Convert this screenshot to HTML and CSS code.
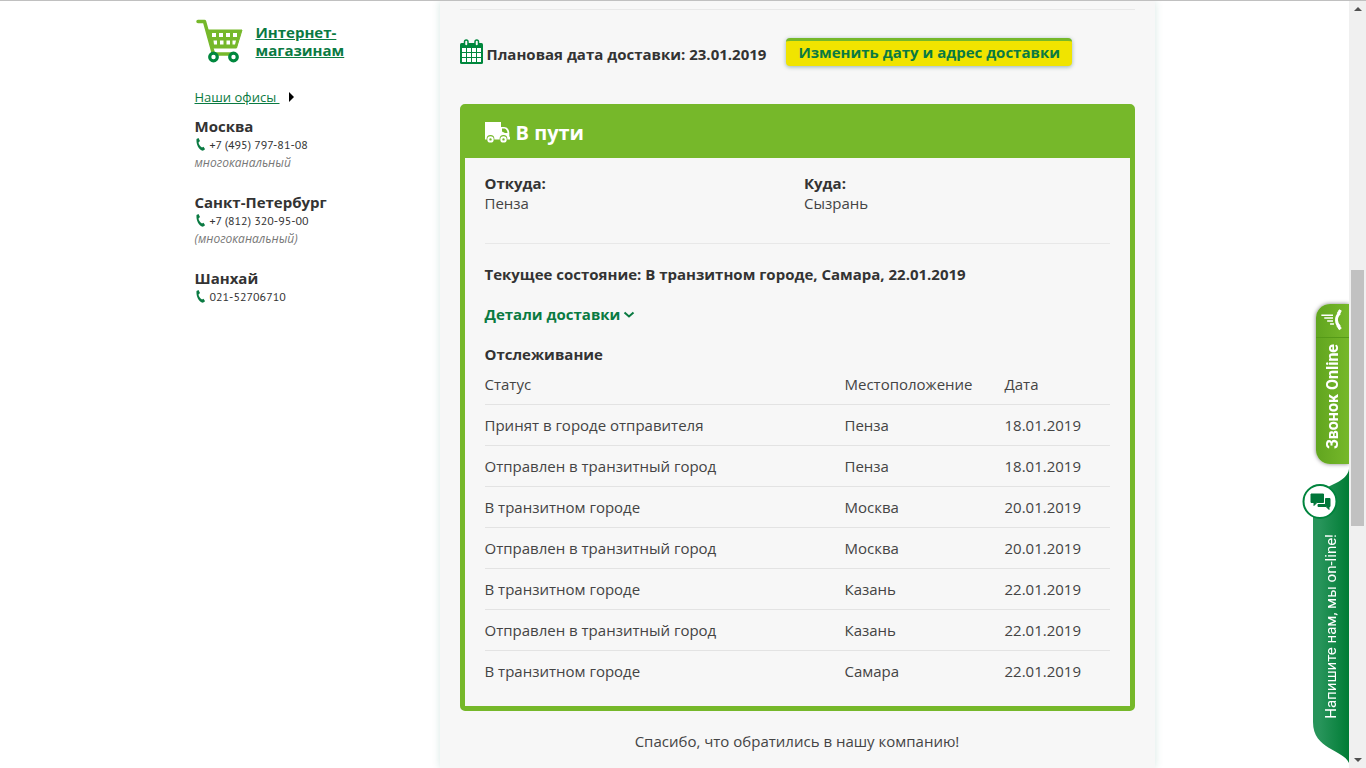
FILE: index.html
```html
<!DOCTYPE html>
<html lang="ru">
<head>
<meta charset="utf-8">
<title>Отслеживание отправления</title>
<link rel="stylesheet" href="styles.css">
</head>
<body>
<div class="page">
  <aside class="sidebar">
    <div class="shops">
      <svg class="shops-icon" viewBox="0 0 48 46" aria-hidden="true">
        <path d="M3 3.500h6.500L18.500 36H38" fill="none" stroke="#76b82a" stroke-width="3.500" stroke-linecap="round" stroke-linejoin="round"/>
        <path d="M12.500 12H47L41.500 30H17.500z" fill="#76b82a" stroke="#76b82a" stroke-linejoin="round"/>
        <path d="M17 15h4v4h-4zM24 15h4v4h-4zM31 15h4v4h-4zM38 15h4v4h-4zM18.500 22.500h3.500v4h-3zM25 22.500h3.500v4H25zM31.500 22.500H35v4h-3.500zM37.500 22.500H41l-1 4h-2.500z" fill="#fff"/>
        <circle cx="18.500" cy="39" r="3.800" fill="#fff" stroke="#00873d" stroke-width="3.200"/>
        <circle cx="38.500" cy="39" r="3.800" fill="#fff" stroke="#00873d" stroke-width="3.200"/>
      </svg>
      <a class="shops-link" href="#">Интернет-<br>магазинам</a>
    </div>
    <div class="offices"><a href="#">Наши офисы&nbsp;</a><span class="offices-arrow"></span></div>
    <section class="office">
      <h2 class="office-city">Москва</h2>
      <p class="office-phone"><svg class="phone-icon" viewBox="0 0 10 14" aria-hidden="true"><path d="M1 1 3 0 4.500 3 3 4.500C3.300 6.500 4.500 8.200 6.500 9.500L8 8.700l1.600 2.500-2.200 1.600C3 11.500.600 6.500 1 1z"/></svg>+7 (495) 797-81-08</p>
      <p class="office-note">многоканальный</p>
    </section>
    <section class="office">
      <h2 class="office-city">Санкт-Петербург</h2>
      <p class="office-phone"><svg class="phone-icon" viewBox="0 0 10 14" aria-hidden="true"><path d="M1 1 3 0 4.500 3 3 4.500C3.300 6.500 4.500 8.200 6.500 9.500L8 8.700l1.600 2.500-2.200 1.600C3 11.500.600 6.500 1 1z"/></svg>+7 (812) 320-95-00</p>
      <p class="office-note">(многоканальный)</p>
    </section>
    <section class="office">
      <h2 class="office-city">Шанхай</h2>
      <p class="office-phone"><svg class="phone-icon" viewBox="0 0 10 14" aria-hidden="true"><path d="M1 1 3 0 4.500 3 3 4.500C3.300 6.500 4.500 8.200 6.500 9.500L8 8.700l1.600 2.500-2.200 1.600C3 11.500.600 6.500 1 1z"/></svg>021-52706710</p>
    </section>
  </aside>

  <main class="main">
    <hr class="rule">
    <div class="plan">
      <svg class="plan-icon" viewBox="0 0 23 26" aria-hidden="true">
        <rect y="4" width="23" height="21" rx="1.500" fill="#00873d"/>
        <path d="M2 9h4v4H2zM7 9h4v4H7zM12 9h4v4h-4zM17 9h4v4h-4zM2 14h4v4H2zM7 14h4v4H7zM12 14h4v4h-4zM17 14h4v4h-4zM2 19h4v4H2zM7 19h4v4H7zM12 19h4v4h-4zM17 19h4v4h-4z" fill="#fff"/>
        <rect x="4.500" y="1" width="3.500" height="6" rx="1.750" fill="#f7f7f7" stroke="#00873d" stroke-width="1.500"/>
        <rect x="15" y="1" width="3.500" height="6" rx="1.750" fill="#f7f7f7" stroke="#00873d" stroke-width="1.500"/>
      </svg>
      <strong class="plan-text">Плановая дата доставки: 23.01.2019</strong>
      <button class="change" type="button">Изменить дату и адрес доставки</button>
    </div>

    <section class="card">
      <h1 class="card-head">
        <svg class="truck" viewBox="0 0 25 21" aria-hidden="true">
          <path d="M0 0h16v17.500H0z" fill="#fff"/>
          <path d="M15 5h4c3.500 0 5.300 3 5.300 6v3.500l.7.500v2.500H15z" fill="#fff"/>
          <path d="M17 6.500h2.500c1.700.500 2.700 2 3 4.500H20l-3-1.500z" fill="#76b82a"/>
          <circle cx="5.500" cy="17" r="3.900" fill="#76b82a"/>
          <circle cx="18.500" cy="17" r="3.900" fill="#76b82a"/>
          <circle cx="5.500" cy="17.400" r="2.200" fill="#76b82a" stroke="#fff" stroke-width="2"/>
          <circle cx="18.500" cy="17.400" r="2.200" fill="#76b82a" stroke="#fff" stroke-width="2"/>
        </svg>
        В пути
      </h1>
      <div class="card-body">
        <dl class="route">
          <div><dt>Откуда:</dt><dd>Пенза</dd></div>
          <div><dt>Куда:</dt><dd>Сызрань</dd></div>
        </dl>
        <p class="state">Текущее состояние: В транзитном городе, Самара, 22.01.2019</p>
        <a class="details" href="#">Детали доставки<svg class="chevron" viewBox="0 0 12 8" aria-hidden="true"><path d="m1.500 2.500 4.500 4 4.500-4" fill="none" stroke="#0a7a42" stroke-width="2"/></svg></a>
        <h2 class="track-title">Отслеживание</h2>
        <table class="track">
          <thead>
            <tr><th class="col-status">Статус</th><th class="col-place">Местоположение</th><th>Дата</th></tr>
          </thead>
          <tbody>
            <tr><td>Принят в городе отправителя</td><td>Пенза</td><td>18.01.2019</td></tr>
            <tr><td>Отправлен в транзитный город</td><td>Пенза</td><td>18.01.2019</td></tr>
            <tr><td>В транзитном городе</td><td>Москва</td><td>20.01.2019</td></tr>
            <tr><td>Отправлен в транзитный город</td><td>Москва</td><td>20.01.2019</td></tr>
            <tr><td>В транзитном городе</td><td>Казань</td><td>22.01.2019</td></tr>
            <tr><td>Отправлен в транзитный город</td><td>Казань</td><td>22.01.2019</td></tr>
            <tr><td>В транзитном городе</td><td>Самара</td><td>22.01.2019</td></tr>
          </tbody>
        </table>
      </div>
    </section>
    <p class="thanks">Спасибо, что обратились в нашу компанию!</p>
  </main>
</div>

<button class="call" type="button">
  <svg class="call-icon" viewBox="0 0 33 34" aria-hidden="true">
    <path d="M5 11.500h12M8 14.500h9M11 17.500h6M14 20.500h4" fill="none" stroke="#fff" stroke-width="1.500"/>
    <path d="M24 9.500c-5 4-4 11 0 14" fill="none" stroke="#fff" stroke-width="3"/>
    <path d="m21.500 9.500 2-3.500 2 1-2 4zM21 22.500l2.500 4 2-1.500-2.500-3.500z" fill="#fff" stroke="#fff" stroke-linejoin="round"/>
  </svg>
  <span class="call-text">Звонок Online</span>
</button>

<button class="chat" type="button">
  <svg class="chat-shape" viewBox="0 0 48 300" aria-hidden="true">
    <defs><linearGradient id="chat-fill"><stop offset=".2" stop-color="#27945a"/><stop offset="1" stop-color="#007c35"/></linearGradient></defs>
    <path d="M47 2c-2 12-16 14-26 21-7 5-10 10-10 20V255c0 28 30 27 36 41z" fill="url(#chat-fill)"/>
    <circle cx="18" cy="34.500" r="16.500" fill="#fff" stroke="#00843d" stroke-width="2"/>
    <path d="M9 27h12.500v8.500H15l-3 3v-3H9z" fill="#00773a" stroke="#00773a" stroke-linejoin="round"/>
    <path d="M23.500 31.500H28v8h-1v3l-3-3h-8V37.500h7.500z" fill="#00773a" stroke="#00773a" stroke-linejoin="round"/>
  </svg>
  <span class="chat-text">Напишите нам, мы on-line!</span>
</button>

<div class="scrollbar" aria-hidden="true">
  <span class="arrow-up"></span>
  <span class="thumb"></span>
  <span class="arrow-down"></span>
</div>
</body>
</html>
```

FILE: styles.css
```css
* { box-sizing: border-box; }

body {
  margin: 0;
  padding-right: 17px;
  border-top: 1px solid #c0c0c0;
  background: #fff;
  color: #333;
  font: 400 15px/20px "Open Sans", "Noto Sans", sans-serif;
}

h1, h2, p, dl, dd { margin: 0; }
button { font-family: inherit; cursor: pointer; border: 0; }
svg { display: block; flex: none; }
a { color: #0a7a42; }

.page {
  display: flex;
  max-width: 960px;
  min-height: calc(100vh - 1px);
  margin: 0 auto;
}

/* sidebar */
.sidebar { flex: 0 0 245px; padding-top: 17px; }
.shops { display: flex; gap: 13px; align-items: center; }
.shops-icon { width: 48px; height: 46px; }
.shops-link { font-weight: 700; line-height: 18px; }
.offices {
  display: flex;
  gap: 9px;
  align-items: center;
  margin: 23px 0 9px;
  font-size: 13px;
}
.offices-arrow {
  border: 5px solid transparent;
  border-left-color: #000;
  border-right: 0;
}
.office { margin-bottom: 20px; }
.office-city { font-size: 15px; line-height: 20px; }
.office-phone {
  display: flex;
  gap: 4px;
  align-items: center;
  font-family: "PT Sans", Roboto, sans-serif;
  font-size: 12px;
  line-height: 18px;
}
.phone-icon { width: 11px; height: 14px; fill: #0a7a42; }
.office-note { font-size: 12px; line-height: 18px; font-style: italic; color: #777; }

/* main column */
.main {
  flex: 1;
  padding: 8px 20px 16px;
  background: #f7f7f7;
  box-shadow: 0 0 8px rgba(0, 110, 90, .16);
}
.rule { margin: 0; border: 0; border-top: 1px solid #e8e8e8; }
.plan { display: flex; align-items: flex-start; margin: 28px 0 34px; }
.plan-icon { width: 23px; height: 26px; margin: 1px 4px 0 0; }
.plan-text { font-weight: 700; line-height: 32px; margin-right: 20px; }
.change {
  height: 28px;
  padding: 0 12px 3px;
  border-top: 3px solid #76b82a;
  border-radius: 4px;
  background: #f0e400;
  box-shadow: 0 1px 4px rgba(0, 80, 80, .4);
  color: #0a7a42;
  font-size: 15px;
  font-weight: 700;
  line-height: 22px;
}

.card { border: 5px solid #76b82a; border-radius: 5px; }
.card-head {
  display: flex;
  gap: 6px;
  align-items: center;
  height: 49px;
  padding: 0 20px 2px;
  background: #76b82a;
  color: #fff;
  font-size: 20px;
  line-height: 28px;
}
.truck { width: 25px; height: 21px; }
.card-body { padding: 15px 20px; }
.route {
  display: grid;
  grid-template-columns: 1fr 1fr;
  gap: 14px;
  padding-bottom: 30px;
  margin-bottom: 20px;
  border-bottom: 1px solid #e8e8e8;
}
.route dt, .state { font-weight: 700; }
.route dd, .track, .thanks { color: #444; }
.details {
  display: flex;
  gap: 3px;
  align-items: center;
  width: fit-content;
  margin: 20px 0;
  font-weight: 700;
  text-decoration: none;
}
.chevron { width: 12px; height: 8px; }
.track-title { font-size: 15px; line-height: 20px; }

.track { width: 100%; border-collapse: separate; border-spacing: 0; table-layout: fixed; }
.track th, .track td { padding: 10px 0; border-bottom: 1px solid #e3e3e3; text-align: left; font-weight: 400; }
.track tr:last-child td { border-bottom: 0; }
.track .col-status { width: 360px; }
.track .col-place { width: 160px; }
.thanks { margin-top: 20px; text-align: center; }

/* floating buttons */
.call {
  position: fixed;
  top: 304px;
  right: 17px;
  width: 33px;
  height: 160px;
  padding: 0;
  display: flex;
  flex-direction: column;
  align-items: center;
  border-radius: 14px 0 0 14px;
  background: linear-gradient(90deg, #61a51f, #76b82a);
  box-shadow: 0 0 4px rgba(0, 0, 0, .5);
  clip-path: inset(-6px 0 -6px -6px);
}
.call-icon { width: 33px; height: 34px; border-bottom: 1px solid #559a18; }
.call-text, .chat-text {
  writing-mode: vertical-rl;
  transform: rotate(180deg);
  color: #fff;
  white-space: nowrap;
}
.call-text { margin-top: 6px; font: 700 16px/20px Roboto, sans-serif; }
.chat {
  position: fixed;
  top: 467px;
  right: 16px;
  width: 48px;
  height: 300px;
  padding: 67px 0 0 19px;
  display: flex;
  align-items: flex-start;
  background: none;
}
.chat-shape { position: absolute; top: 0; left: 0; width: 48px; height: 300px; }
.chat-text { position: relative; font: 400 15px/20px Roboto, sans-serif; }

/* window scrollbar */
.scrollbar {
  position: fixed;
  top: 1px;
  right: 0;
  bottom: 0;
  width: 17px;
  padding: 6px 2px;
  display: grid;
  grid-template-rows: auto 259fr 256fr 232fr auto;
  background: #f0f0f0;
}
.arrow-up, .arrow-down { justify-self: center; border: 4px solid transparent; }
.arrow-up { grid-row: 1; border-top: 0; border-bottom-color: #505050; }
.thumb { grid-row: 3; background: #c1c1c1; }
.arrow-down { grid-row: 5; border-bottom: 0; border-top-color: #505050; }
```
